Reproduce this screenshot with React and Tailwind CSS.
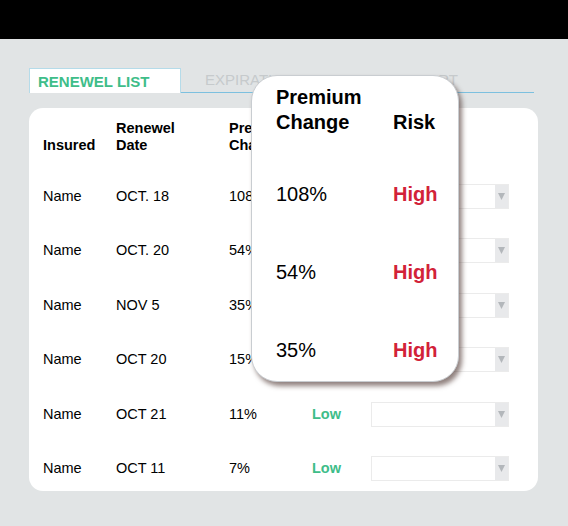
const rows = [
  { name: 'Name', date: 'OCT. 18', change: '108%', risk: 'High' },
  { name: 'Name', date: 'OCT. 20', change: '54%', risk: 'High' },
  { name: 'Name', date: 'NOV 5', change: '35%', risk: 'High' },
  { name: 'Name', date: 'OCT 20', change: '15%', risk: 'Low' },
  { name: 'Name', date: 'OCT 21', change: '11%', risk: 'Low' },
  { name: 'Name', date: 'OCT 11', change: '7%', risk: 'Low' },
];

const popupRows = [
  { change: '108%', risk: 'High' },
  { change: '54%', risk: 'High' },
  { change: '35%', risk: 'High' },
];

const Select = () => (
  <div className="flex h-[25px] w-[138px] border border-[#ebebeb] bg-white">
    <div className="flex-1" />
    <div className="flex w-[13px] items-center justify-center bg-[#e8e9eb]">
      <svg width="7" height="7" viewBox="0 0 7 7">
        <path d="M0 0 L7 0 L3.5 7 Z" fill="#b3b7bb" />
      </svg>
    </div>
  </div>
);

const RiskText = ({ risk }) => (
  <span
    className={`font-bold ${
      risk === 'High' ? 'text-[#d22238]' : 'text-[#3ebd89]'
    }`}
  >
    {risk}
  </span>
);

const App = () => {
  return (
    <div className="relative h-[526px] w-[568px] overflow-hidden bg-[#e1e4e5] font-['Liberation_Sans',Arial,sans-serif] text-black">
      <div className="h-[39px] bg-black" />

      {/* tabs */}
      <div className="ml-[29px] mr-[34px] mt-[29px] flex h-[25px] items-end border-b border-[#7cc0df]">
        <div className="-mb-px flex h-[25px] w-[152px] items-center border border-b-0 border-[#b5dbe9] bg-white pl-[8px] pt-[2px] text-[15px] font-bold text-[#3ebd89]">
          RENEWEL LIST
        </div>
        <div className="ml-[24px] flex h-[24px] items-center pt-[1px] text-[15px] text-[#c6cacc]">
          EXPIRATION LIST
        </div>
        <div className="ml-auto mr-[76px] flex h-[24px] items-center pt-[1px] text-[15px] text-[#c6cacc]">
          CLAIMS REPORT
        </div>
      </div>

      {/* table card */}
      <div className="ml-[29px] mt-[15px] h-[383px] w-[509px] rounded-[14px] bg-white pl-[14px] pt-[12px] text-[14.5px]">
        <div className="grid grid-cols-[73px_113px_83px_59px_138px] items-end font-bold leading-[17px]">
          <div>Insured</div>
          <div>
            Renewel
            <br />
            Date
          </div>
          <div>
            Premium
            <br />
            Change
          </div>
          <div>Risk</div>
          <div />
        </div>
        <div className="mt-[15px]">
          {rows.map((row, i) => (
            <div
              key={i}
              className="grid h-[54.5px] grid-cols-[73px_113px_83px_59px_138px] items-center leading-[17px]"
            >
              <div>{row.name}</div>
              <div>{row.date}</div>
              <div>{row.change}</div>
              <div>
                <RiskText risk={row.risk} />
              </div>
              <Select />
            </div>
          ))}
        </div>
      </div>

      {/* hover popup */}
      <div className="absolute left-[251px] top-[75px] h-[307px] w-[208px] rounded-[26px] border border-[#c9cdd1] bg-white pl-[24px] pt-[9px] text-[20px] shadow-[3px_4px_5px_rgba(70,45,40,0.6)]">
        <div className="grid grid-cols-[117px_1fr] items-end font-bold leading-[25px]">
          <div>
            Premium
            <br />
            Change
          </div>
          <div>Risk</div>
        </div>
        <div className="mt-[20px]">
          {popupRows.map((row, i) => (
            <div
              key={i}
              className="grid h-[78px] grid-cols-[117px_1fr] items-center leading-[25px]"
            >
              <div>{row.change}</div>
              <div>
                <RiskText risk={row.risk} />
              </div>
            </div>
          ))}
        </div>
      </div>
    </div>
  );
};

export default App;
